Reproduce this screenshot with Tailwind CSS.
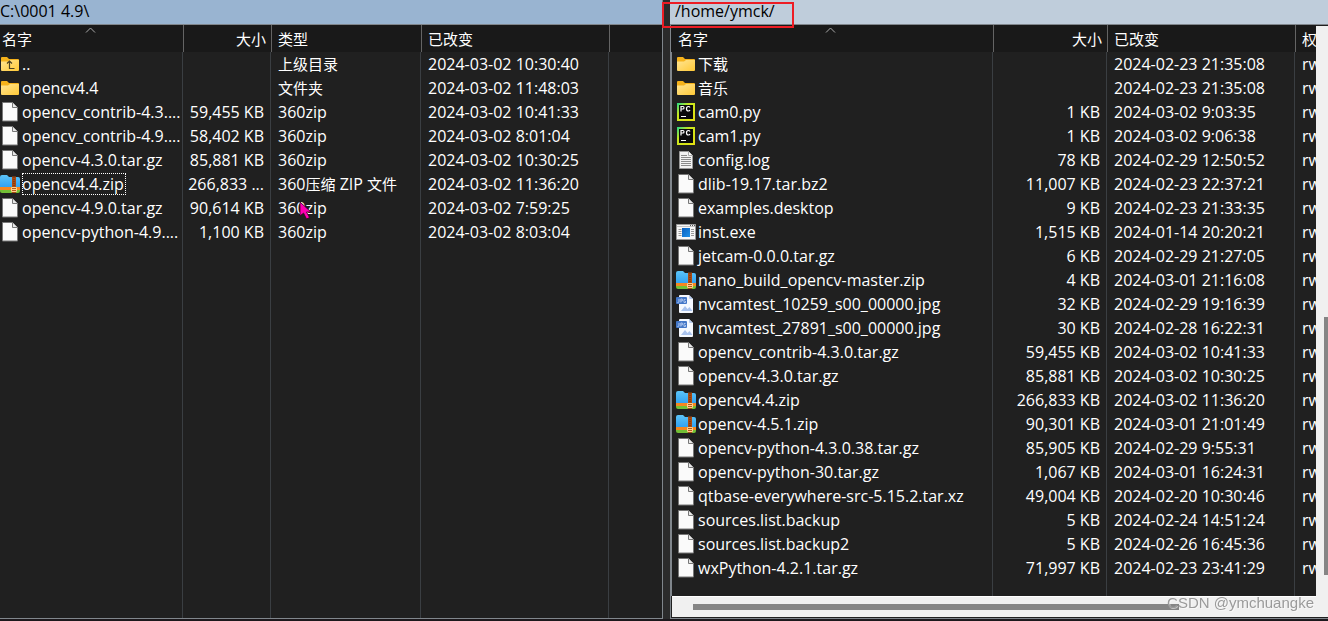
<!DOCTYPE html>
<html lang="zh-CN">
<head>
<meta charset="utf-8">
<title>/home/ymck/</title>
<script src="https://cdn.jsdelivr.net/npm/@tailwindcss/browser@4"></script>
</head>
<body class="h-screen overflow-hidden bg-[#2b2b2b] font-['Open_Sans','Noto_Sans_CJK_SC',sans-serif] text-base leading-6 text-white">
<svg class="absolute h-0 w-0" aria-hidden="true">
  <defs>
    <linearGradient id="gFolder" x1="0" y1="0" x2="1" y2="1"><stop offset="0" stop-color="#ffe594"/><stop offset="1" stop-color="#ffc937"/></linearGradient>
    <linearGradient id="gZip" x1="0" y1="0" x2="0" y2="1"><stop offset="0" stop-color="#5cc4f8"/><stop offset="1" stop-color="#2b9cf0"/></linearGradient>
    <linearGradient id="gPy" x1="0" y1="0" x2="1" y2="1"><stop offset="0" stop-color="#21d789"/><stop offset=".35" stop-color="#c8e820"/><stop offset="1" stop-color="#e6e010"/></linearGradient>
    <linearGradient id="gExe" x1="0" y1="0" x2="1" y2="1"><stop offset="0" stop-color="#0a5fc0"/><stop offset="1" stop-color="#1c90e8"/></linearGradient>
    <symbol id="folder" viewBox="0 0 20 24"><path d="M1 6q0-1 1-1h5l2 2h9q1 0 1 1v3H1z" fill="#f5b21b"/><path d="M1 9.500h7l2-1.500h9v10q0 1-1 1H2q-1 0-1-1z" fill="url(#gFolder)"/></symbol>
    <symbol id="up" viewBox="0 0 20 24"><use href="#folder"/><path d="M9.500 9v7.500h5M7 11.500 9.500 9l2.500 2.500" fill="none" stroke="#4a4020" stroke-width="1.200"/></symbol>
    <symbol id="file" viewBox="0 0 20 24"><path d="M2.500 2.500h10l5 5v13.500h-15z" fill="#fafafa" stroke="#777"/><path d="M12.500 2.500v5h5" fill="#e8e8e8" stroke="#777"/></symbol>
    <symbol id="log" viewBox="0 0 20 24"><path d="M3.500 3.500h9l4 4V20.500h-13z" fill="#f3f3f3" stroke="#999"/><path d="M12.500 3.500v4h4" fill="#fff" stroke="#aaa"/><path d="M5 7.500h6M5 9.500h10M5 11.500h10M5 13.500h10M5 15.500h10M5 17.500h10" stroke="#8b8b8b"/></symbol>
    <symbol id="zip" viewBox="0 0 20 24"><path d="M0 5q0-2 2-2h5l2 2h9q2 0 2 2v10H0z" fill="url(#gZip)"/><path d="M0 15h20v3H0z" fill="#f5871f"/><path d="M0 18h20v1q0 2-2 2H2q-2 0-2-2z" fill="#72bf35"/><path d="M12 4.500h4V21h-4z" fill="#a94a12"/><path d="M14 5v10" stroke="#6e2d0a" stroke-dasharray="1 1"/><path d="M11.500 15.500h5v4h-5zM11.500 17.500h5" fill="#b5561c" stroke="#ffd08a"/></symbol>
    <symbol id="py" viewBox="0 0 20 24"><path d="M1 3h18v18H1z" fill="url(#gPy)"/><path d="M3 5h14v14H3z" fill="#0a0a0a"/><path d="M5 11.500v-5h2q1 0 1 1.250T7 9H5M14 7.500q-.5-1-1.500-1-2 0-2 2.250t2 2.250q1 0 1.500-1M5 16.500h5" fill="none" stroke="#fff" stroke-width="1.200"/></symbol>
    <symbol id="exe" viewBox="0 0 20 24"><path d="M.500 4.500h19v15H.500z" fill="#f7f7f7" stroke="#999"/><path d="M1 6.500h18" stroke="#c4c4c4"/><path d="M14 5.500h1M16 5.500h1M18 5.500h1" stroke="#555"/><path d="M2.500 9.500h3M2.500 11.500h3M2.500 13.500h3M2.500 15.500h3M15 9.500h3M15 11.500h3M15 13.500h3M15 15.500h3" stroke="#999"/><path d="M6 8h8v9H6z" fill="url(#gExe)"/></symbol>
    <symbol id="jpg" viewBox="0 0 20 24"><path d="M4 3h9l4 4v13q0 1-1 1H4q-1 0-1-1V4q0-1 1-1z" fill="#f5f9ff"/><path d="M13 3v3q0 1 1 1h3z" fill="#b8cdf0"/><path d="M5 19l4-5 2.500 3 2-2 3 4z" fill="#a9c3ee"/><rect y="5" width="11" height="7" rx="1" fill="#4377c8"/><path d="M3 7v2.500q0 1-1.500 1M4.800 10.500V7h1.500v2H5M9.500 7.500H8v3h1.500V9" fill="none" stroke="#c6d8f5" stroke-width=".8"/></symbol>
  </defs>
</svg>
<main class="flex h-full flex-col">
  <div class="grid min-h-0 flex-1 grid-cols-[663fr_7px_658fr]">
    <section class="flex min-h-0 min-w-0 flex-col border-r border-b border-[#80868c] bg-[#202020]" aria-label="本地">
      <h2 class="h-6 shrink-0 bg-[#99b4d1] leading-[22px] text-black">C:\0001 4.9\</h2>
      <div class="min-h-0 flex-1 overflow-hidden border-t border-[#80868c]">
        <table class="h-full w-full table-fixed border-separate border-spacing-0">
          <colgroup><col class="w-[183px]"><col class="w-[88px]"><col class="w-[150px]"><col class="w-[188px]"><col></colgroup>
          <thead><tr id="lh" class="h-[27px] bg-[#191919] text-left text-[15px]"></tr></thead>
          <tbody id="lb"></tbody>
        </table>
      </div>
    </section>
    <div class="bg-[#2b2b2b]"></div>
    <section class="flex min-h-0 min-w-0 flex-col border-b border-[#80868c] bg-[#202020]" aria-label="远程">
      <h2 class="relative h-6 shrink-0 bg-[#bfcddb] pl-[5px] leading-[22px] text-black">/home/ymck/<span class="absolute top-0.5 -left-2 h-[26px] w-[132px] border-2 border-[#ed1c24]"></span></h2>
      <div class="flex min-h-0 flex-1 border-t border-l border-[#80868c]">
        <div class="flex min-w-0 flex-1 flex-col">
          <div class="min-h-0 flex-1 overflow-hidden">
            <table class="h-full w-full table-fixed border-separate border-spacing-0">
              <colgroup><col><col class="w-[114px]"><col class="w-[188px]"><col class="w-[21px]"></colgroup>
              <thead><tr id="rh" class="h-[27px] bg-[#191919] text-left text-[15px]"></tr></thead>
              <tbody id="rb"></tbody>
            </table>
          </div>
          <div class="ml-px flex h-[21px] shrink-0 items-center border-t border-white bg-[#f0f0f0] pl-[21px]"><div class="h-1.5 w-[78%] bg-[#858585]"></div></div>
          <div class="h-px shrink-0"></div>
        </div>
        <div class="flex w-3 shrink-0 flex-col pt-px pb-px"><div class="flex flex-1 flex-col items-end bg-[#f0f0f0]"><div class="flex-[291]"></div><div class="w-1 flex-[258] bg-[#858585]"></div><div class="flex-[42]"></div></div></div>
      </div>
    </section>
  </div>
  <div class="h-0.5 shrink-0 bg-[#1c181c]"></div>
</main>
<p class="fixed right-3.5 bottom-1.5 font-['Liberation_Sans',sans-serif] text-[15px] text-[#9a9a9a] [text-shadow:1px_1px_0_#ffffff80]">CSDN @ymchuangke</p>
<svg class="fixed top-[201px] left-[299px] h-5 w-4" viewBox="0 0 16 20" aria-hidden="true"><path d="M1 1v14l3.500-3 3 6 3-1.500-3-5.500H12z" fill="#ff00b4" stroke="#30001f" stroke-width=".8"/></svg>
<script>
const cjk = s => s.replace(/[\u4e00-\u9fff]+/g, m => `<span class="text-[15px]">${m}</span>`);
const head = (id, names, sizeCol) => {
  document.getElementById(id).innerHTML = names.map((n, i) =>
    `<th scope="col" class="overflow-hidden whitespace-nowrap p-0 pt-px align-middle font-normal ${i === 0 ? 'relative ' + (id === 'rh' ? 'pl-[7px]' : 'pl-0.5') : 'border-l border-[#646464] pl-1.5'} ${i === sizeCol ? 'pr-[5px] text-right' : ''}">${n}${i === 0 ? '<svg class="absolute top-0.5 left-1/2 h-1.5 w-3 -ml-2" viewBox="0 0 12 6"><path d="M2 5.500 6.500 1 11 5.500" fill="none" stroke="#aaa"/></svg>' : ''}</th>`).join('');
};
const body = (id, rows, cols) => {
  const right = id === 'rb';
  const line = i => i < cols - 1 ? 'border-r border-[#3a3e42]' : '';
  const edge = right ? 'border-l border-l-[#80868c] ' : '';
  document.getElementById(id).innerHTML = rows.map(r => '<tr class="h-6">' + Array.from({length: cols}, (_, i) => {
    if (i === 0) {
      const name = `<span class="whitespace-nowrap ${r[1] === 'opencv4.4.zip' && !right ? 'outline-1 outline-dotted outline-white -outline-offset-1 h-[22px] leading-[22px] pr-0.5' : ''}">${cjk(r[1])}</span>`;
      return `<td class="${edge}${line(0)} overflow-hidden p-0"><div class="flex h-6 min-w-0 items-center gap-0.5 ${right ? 'pl-1' : ''}"><svg class="h-6 w-5 shrink-0" aria-hidden="true"><use href="#${r[0]}"/></svg>${name}</div></td>`;
    }
    return `<td class="${line(i)} overflow-hidden whitespace-nowrap p-0 ${i === 1 ? 'pr-1.5 text-right' : 'pl-[7px]'}">${cjk(r[i + 1] || '')}</td>`;
  }).join('') + '</tr>').join('') +
  '<tr>' + Array.from({length: cols}, (_, i) => `<td class="${i === 0 ? edge : ''}${line(i)} p-0"></td>`).join('') + '</tr>';
};
head('lh', ['名字', '大小', '类型', '已改变', ''], 1);
head('rh', ['名字', '大小', '已改变', '权'], 1);
body('lb', [
  ['up', '..', '', '上级目录', '2024-03-02 10:30:40'],
  ['folder', 'opencv4.4', '', '文件夹', '2024-03-02 11:48:03'],
  ['file', 'opencv_contrib-4.3....', '59,455 KB', '360zip', '2024-03-02 10:41:33'],
  ['file', 'opencv_contrib-4.9....', '58,402 KB', '360zip', '2024-03-02 8:01:04'],
  ['file', 'opencv-4.3.0.tar.gz', '85,881 KB', '360zip', '2024-03-02 10:30:25'],
  ['zip', 'opencv4.4.zip', '266,833 ...', '360压缩 ZIP 文件', '2024-03-02 11:36:20'],
  ['file', 'opencv-4.9.0.tar.gz', '90,614 KB', '360zip', '2024-03-02 7:59:25'],
  ['file', 'opencv-python-4.9....', '1,100 KB', '360zip', '2024-03-02 8:03:04']
], 5);
body('rb', [
  ['folder', '下载', '', '2024-02-23 21:35:08', 'rw'],
  ['folder', '音乐', '', '2024-02-23 21:35:08', 'rw'],
  ['py', 'cam0.py', '1 KB', '2024-03-02 9:03:35', 'rw'],
  ['py', 'cam1.py', '1 KB', '2024-03-02 9:06:38', 'rw'],
  ['log', 'config.log', '78 KB', '2024-02-29 12:50:52', 'rw'],
  ['file', 'dlib-19.17.tar.bz2', '11,007 KB', '2024-02-23 22:37:21', 'rw'],
  ['file', 'examples.desktop', '9 KB', '2024-02-23 21:33:35', 'rw'],
  ['exe', 'inst.exe', '1,515 KB', '2024-01-14 20:20:21', 'rw'],
  ['file', 'jetcam-0.0.0.tar.gz', '6 KB', '2024-02-29 21:27:05', 'rw'],
  ['zip', 'nano_build_opencv-master.zip', '4 KB', '2024-03-01 21:16:08', 'rw'],
  ['jpg', 'nvcamtest_10259_s00_00000.jpg', '32 KB', '2024-02-29 19:16:39', 'rw'],
  ['jpg', 'nvcamtest_27891_s00_00000.jpg', '30 KB', '2024-02-28 16:22:31', 'rw'],
  ['file', 'opencv_contrib-4.3.0.tar.gz', '59,455 KB', '2024-03-02 10:41:33', 'rw'],
  ['file', 'opencv-4.3.0.tar.gz', '85,881 KB', '2024-03-02 10:30:25', 'rw'],
  ['zip', 'opencv4.4.zip', '266,833 KB', '2024-03-02 11:36:20', 'rw'],
  ['zip', 'opencv-4.5.1.zip', '90,301 KB', '2024-03-01 21:01:49', 'rw'],
  ['file', 'opencv-python-4.3.0.38.tar.gz', '85,905 KB', '2024-02-29 9:55:31', 'rw'],
  ['file', 'opencv-python-30.tar.gz', '1,067 KB', '2024-03-01 16:24:31', 'rw'],
  ['file', 'qtbase-everywhere-src-5.15.2.tar.xz', '49,004 KB', '2024-02-20 10:30:46', 'rw'],
  ['file', 'sources.list.backup', '5 KB', '2024-02-24 14:51:24', 'rw'],
  ['file', 'sources.list.backup2', '5 KB', '2024-02-26 16:45:36', 'rw'],
  ['file', 'wxPython-4.2.1.tar.gz', '71,997 KB', '2024-02-23 23:41:29', 'rw']
], 4);
</script>
</body>
</html>
